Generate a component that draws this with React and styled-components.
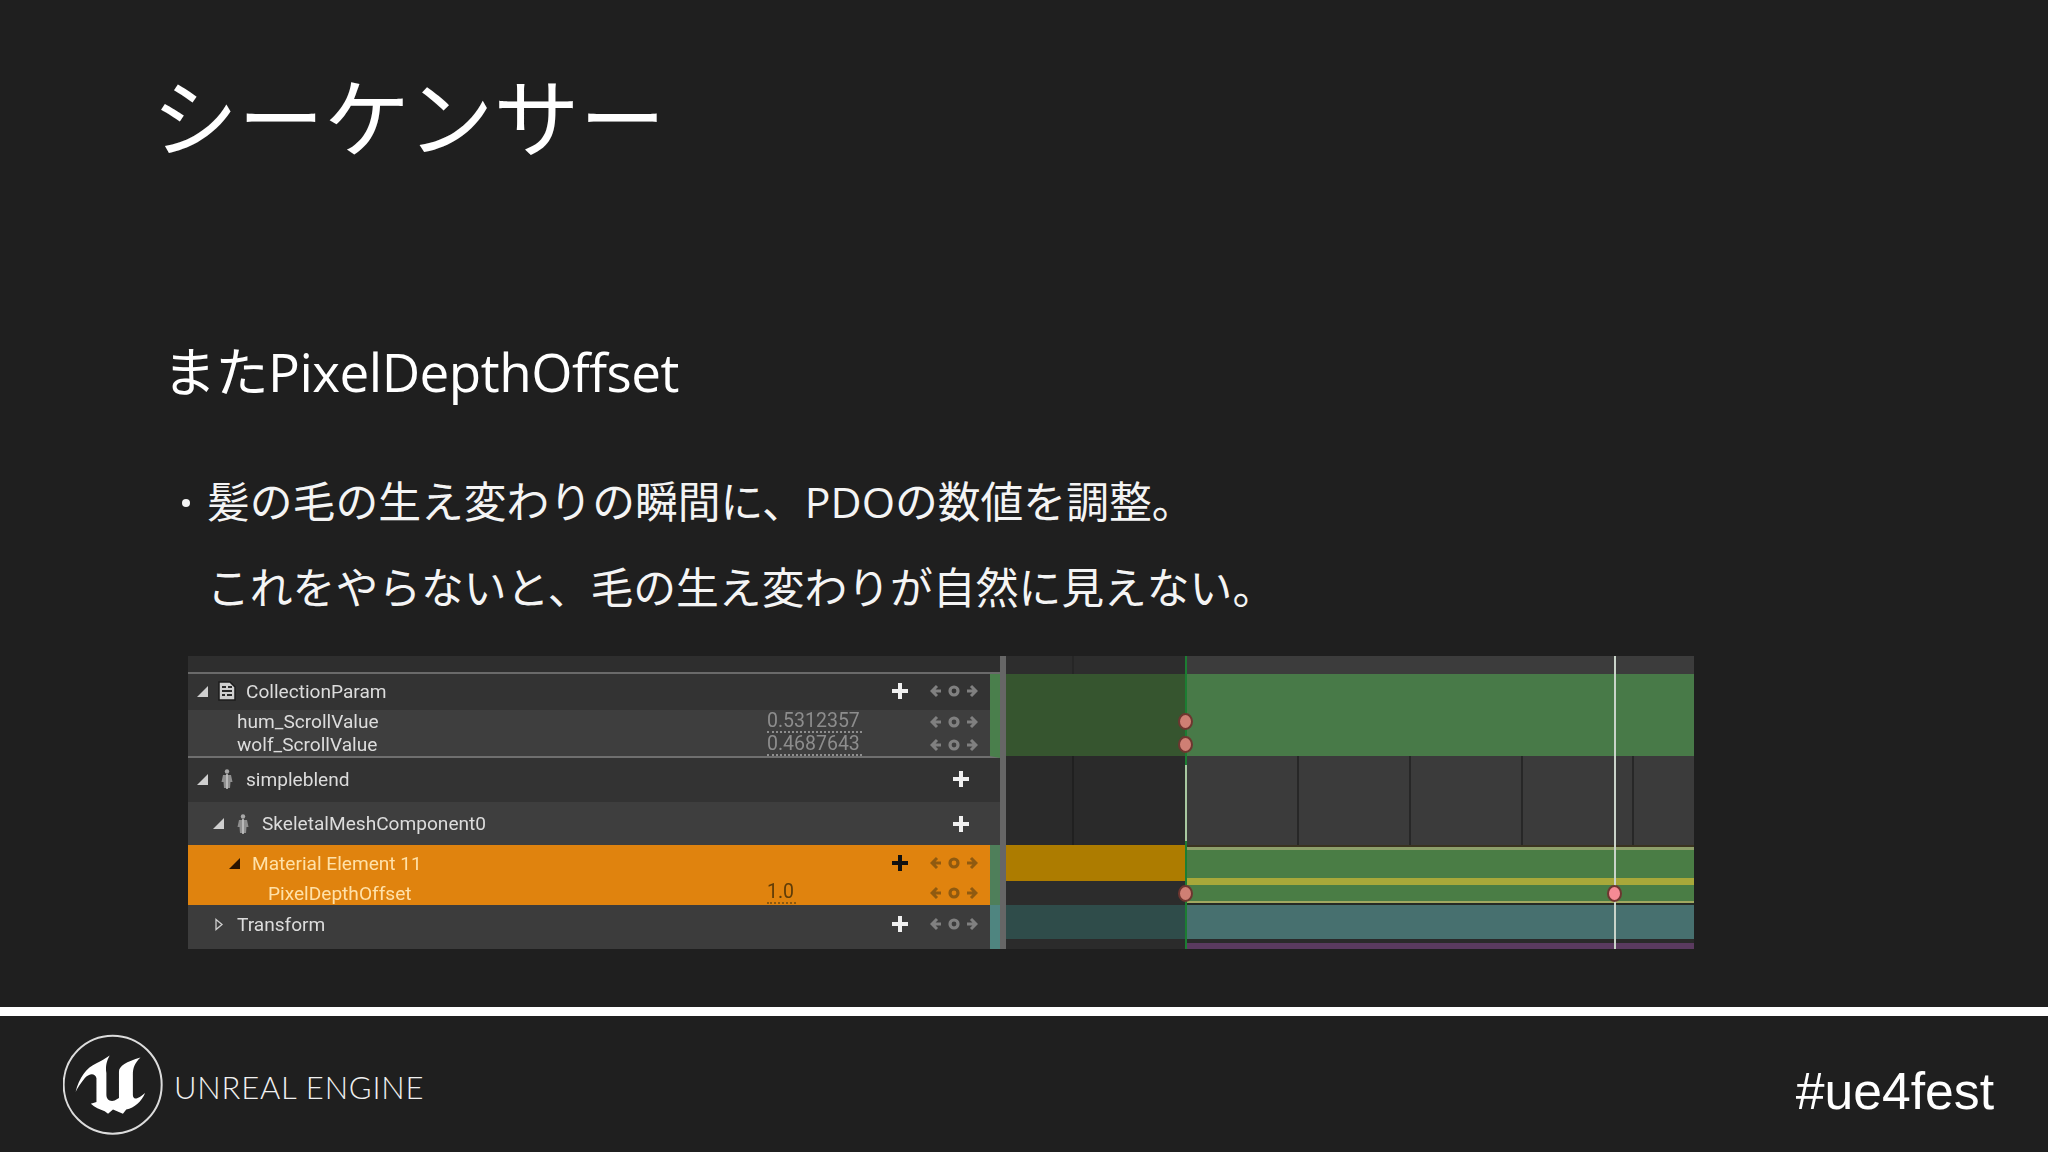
import React from 'react';
import styled, { createGlobalStyle } from 'styled-components';

const GlobalStyle = createGlobalStyle`
  html, body {
    margin: 0;
    background: #1f1f1f;
  }
`;

const JP = `"Open Sans", "Noto Sans CJK JP", sans-serif`;

const Slide = styled.div`
  width: 2048px;
  height: 1152px;
  display: flex;
  flex-direction: column;
  overflow: hidden;
  background: #1f1f1f;
  color: #fff;
  font-family: ${JP};
`;

const Main = styled.main`
  height: 1007px;
  padding: 68px 0 0 155px;
  box-sizing: border-box;
  display: flex;
  flex-direction: column;
`;

const Title = styled.h1`
  margin: 0 0 0 -3px;
  font-size: 86px;
  line-height: 100px;
  font-weight: 400;
`;

const Subtitle = styled.h2`
  margin: 169px 0 0 8px;
  font-size: 53px;
  line-height: 70px;
  font-weight: 400;
  letter-spacing: -0.5px;
`;

const BulletList = styled.div`
  margin: 74px 0 0 23px;
  display: flex;
  flex-direction: column;
  gap: 44px;
  font-size: 42.8px;
  line-height: 42px;
  font-weight: 400;
  color: #f4f4f4;
`;

const BulletLine = styled.div`
  padding-left: 30px;
  margin-left: -1px;
  white-space: nowrap;
  position: relative;
`;

const BulletDot = styled.span`
  position: absolute;
  left: 5px;
  top: 18px;
  width: 8px;
  height: 8px;
  border-radius: 50%;
  background: #f4f4f4;
`;

/* sequencer capture, the source picture is soft so the whole block gets a slight blur */
const Sequencer = styled.section`
  margin: 47px 0 0 33px;
  width: 1506px;
  height: 293px;
  display: flex;
  font-family: Roboto, sans-serif;
  filter: blur(0.5px);
`;

const Outliner = styled.div`
  width: 812px;
  display: flex;
  flex-direction: column;
  background: #333;
`;

const Splitter = styled.div`
  width: 6px;
  background: #666;
`;

const HeaderBand = styled.div`
  height: 16px;
  background: #2e2e2e;
  border-bottom: 2px solid #6a6a6a;
`;

const Row = styled.div`
  height: ${({ $h }) => $h}px;
  display: grid;
  grid-template-columns: 579px 118px 30px 15px 48px 12px;
  align-items: center;
  box-sizing: border-box;
  background: ${({ $bg }) => $bg};
  border-bottom: ${({ $line }) => ($line ? '2px solid #6f6f6f' : '0')};
  border-right: 10px solid ${({ $strip, $bg }) => $strip || $bg};
  padding-bottom: ${({ $lift }) => $lift || 0}px;
  color: ${({ $accent }) => ($accent ? '#ffe1a8' : '#dcdcdc')};
  font-size: 19.1px;
`;

const LabelCell = styled.div`
  display: flex;
  align-items: center;
  padding-left: ${({ $indent }) => $indent}px;
  white-space: nowrap;
`;

const ToggleIcon = styled.svg`
  width: 13px;
  height: 13px;
  margin-right: ${({ $gap }) => $gap}px;
  flex: none;
`;

const RowIcon = styled.svg`
  width: 20px;
  height: 22px;
  margin-right: 9px;
  flex: none;
`;

const Value = styled.span`
  justify-self: start;
  color: ${({ $accent }) => ($accent ? '#5e3c08' : '#8d8d8d')};
  border-bottom: 2px dotted ${({ $accent }) => ($accent ? '#8c5a10' : '#8d8d8d')};
  font-size: 19.5px;
  line-height: 20px;
  padding-right: 2px;
  grid-column: 2;
`;

const PlusIcon = styled.svg`
  width: 18px;
  height: 18px;
  justify-self: center;
  grid-column: ${({ $far }) => ($far ? 5 : 3)};
  ${({ $far }) => ($far ? 'margin-left: 13px;' : '')}
`;

const KeyControls = styled.svg`
  width: 48px;
  height: 14px;
  grid-column: 5;
`;

const Timeline = styled.div`
  position: relative;
  width: 688px;
  display: grid;
  grid-template-columns: 180px 508px;
  grid-template-rows: 18px 82px 89px 60px 34px 10px;
`;

const Track = styled.div`
  background: ${({ $bg }) => $bg};
`;

const GridTrack = styled.div`
  background: ${({ $stops, $line, $bg }) =>
    `${$stops
      .map((x) => `linear-gradient(${$line}, ${$line}) ${x}px 0 / 2px 100% no-repeat`)
      .join(', ')}, ${$bg}`};
`;

const Stack = styled.div`
  display: flex;
  flex-direction: column;
`;

const Slice = styled.div`
  height: ${({ $h }) => $h}px;
  background: ${({ $bg }) => $bg};
  flex: none;
`;

const Playhead = styled.div`
  position: absolute;
  top: 0;
  bottom: 0;
  left: ${({ $x }) => $x}px;
  width: 2px;
  background: ${({ $color }) => $color};
`;

const Segment = styled.div`
  position: absolute;
  top: 109px;
  height: 76px;
  left: 179px;
  width: 2px;
  background: #a8c8a0;
`;

const Keyframe = styled.div`
  position: absolute;
  left: ${({ $x }) => $x - 8}px;
  top: ${({ $y }) => $y - 9}px;
  width: 11px;
  height: 13px;
  border: 2.5px solid #6e3630;
  border-radius: 50%;
  background: ${({ $bright }) => ($bright ? '#f58a94' : '#cf7f74')};
`;

const Rule = styled.div`
  height: 9px;
  background: #fff;
  flex: none;
`;

const Footer = styled.footer`
  flex: 1;
  display: flex;
  align-items: flex-start;
  justify-content: space-between;
  padding: 18px 54px 0 63px;
`;

const Brand = styled.div`
  display: flex;
  align-items: center;
  gap: 11px;
`;

const BrandName = styled.span`
  font-family: Lato, sans-serif;
  font-weight: 300;
  font-size: 31px;
  letter-spacing: 0.8px;
  color: #f0f0f0;
  margin-top: 4px;
`;

const Hashtag = styled.span`
  font-family: "Liberation Sans", Arial, sans-serif;
  font-size: 51.7px;
  line-height: 56px;
  margin-top: 29px;
  color: #fff;
`;

const Toggle = ({ open, color = '#cfcfcf', gap = 8 }) => (
  <ToggleIcon $gap={gap} viewBox="0 0 13 13">
    {open ? (
      <path d="M12 1 L12 12 L1 12 Z" fill={color} />
    ) : (
      <path d="M4 1.5 L10 6.5 L4 11.5 Z" fill="none" stroke={color} strokeWidth="1.3" />
    )}
  </ToggleIcon>
);

const ParamIcon = () => (
  <RowIcon viewBox="0 0 20 22">
    <path d="M2 2 H13 L18 7 V20 H2 Z" fill="#cfcfcf" stroke="#1c1c1c" strokeWidth="1.5" />
    <path d="M5 7 H9 M11 7 H15 M5 11 H15 M5 15 H8 M10 15 H15" stroke="#2a2a2a" strokeWidth="2" />
  </RowIcon>
);

const PersonIcon = () => (
  <RowIcon viewBox="0 0 20 22">
    <circle cx="10" cy="3.5" r="2.2" fill="#a8a8a8" />
    <path d="M6 7 H14 L15.5 14 H13.5 L13 20 H7 L6.5 14 H4.5 Z" fill="#8f8f8f" />
    <path d="M10 6 V21" stroke="#c4c4c4" strokeWidth="1.6" />
  </RowIcon>
);

const Plus = ({ far, color = '#f0f0f0' }) => (
  <PlusIcon $far={far} viewBox="0 0 18 18">
    <path d="M7 1 H11 V7 H17 V11 H11 V17 H7 V11 H1 V7 H7 Z" fill={color} />
  </PlusIcon>
);

const Keys = ({ color = '#808080' }) => (
  <KeyControls viewBox="0 0 48 14">
    <path d="M11 7 H3 M7 2 L2 7 L7 12" fill="none" stroke={color} strokeWidth="3" />
    <circle cx="24" cy="7" r="4" fill="none" stroke={color} strokeWidth="3.2" />
    <path d="M37 7 H45 M41 2 L46 7 L41 12" fill="none" stroke={color} strokeWidth="3" />
  </KeyControls>
);

const UnrealLogo = () => (
  <svg width="100" height="102" viewBox="24 18 302 306" aria-hidden="true">
    <circle cx="174" cy="170" r="148" fill="none" stroke="#dcdcdc" strokeWidth="6" />
    <path
      d="M62 192 C72 150 95 118 125 105 C140 98 150 92 165 82 C155 100 152 115 155 135 L155 200 C155 215 165 222 180 218 L193 210 L193 130 C193 115 215 100 258 88 C240 105 235 120 235 140 L235 200 C235 215 245 218 272 195 C262 220 240 240 215 245 L205 258 L175 245 L160 258 L150 250 C135 245 120 240 108 228 L125 222 L125 150 C120 135 105 135 90 150 C78 165 68 180 62 192 Z"
      fill="#fff"
    />
  </svg>
);

const App = () => (
  <Slide>
    <GlobalStyle />
    <Main>
      <Title>シーケンサー</Title>
      <Subtitle>またPixelDepthOffset</Subtitle>
      <BulletList>
        <BulletLine>
          <BulletDot />
          髪の毛の生え変わりの瞬間に、PDOの数値を調整。
        </BulletLine>
        <BulletLine>これをやらないと、毛の生え変わりが自然に見えない。</BulletLine>
      </BulletList>
      <Sequencer>
        <Outliner>
          <HeaderBand />
          <Row $h={36} $bg="#333" $strip="#4a7f4c" $lift={2}>
            <LabelCell $indent={8}>
              <Toggle open />
              <ParamIcon />
              CollectionParam
            </LabelCell>
            <Plus />
            <Keys />
          </Row>
          <Row $h={23} $bg="#3e3e3e" $strip="#4a7f4c">
            <LabelCell $indent={49}>hum_ScrollValue</LabelCell>
            <Value>0.5312357</Value>
            <Keys />
          </Row>
          <Row $h={25} $bg="#3e3e3e" $strip="#4a7f4c" $line>
            <LabelCell $indent={49}>wolf_ScrollValue</LabelCell>
            <Value>0.4687643</Value>
            <Keys />
          </Row>
          <Row $h={44} $bg="#333" $lift={2}>
            <LabelCell $indent={8}>
              <Toggle open />
              <PersonIcon />
              simpleblend
            </LabelCell>
            <Plus far />
          </Row>
          <Row $h={43} $bg="#3e3e3e">
            <LabelCell $indent={24}>
              <Toggle open />
              <PersonIcon />
              SkeletalMeshComponent0
            </LabelCell>
            <Plus far />
          </Row>
          <Row $h={36} $bg="#e0830e" $strip="#4f7f5a" $accent>
            <LabelCell $indent={40}>
              <Toggle open color="#2a1400" gap={11} />
              Material Element 11
            </LabelCell>
            <Plus color="#111" />
            <Keys color="#8f5a10" />
          </Row>
          <Row $h={24} $bg="#e0830e" $strip="#4f7f5a" $accent>
            <LabelCell $indent={80}>PixelDepthOffset</LabelCell>
            <Value $accent>1.0</Value>
            <Keys color="#8f5a10" />
          </Row>
          <Row $h={44} $bg="#3c3c3c" $strip="#4f8580" $lift={6}>
            <LabelCell $indent={24}>
              <Toggle gap={12} />
              Transform
            </LabelCell>
            <Plus />
            <Keys />
          </Row>
        </Outliner>
        <Splitter />
        <Timeline>
          <GridTrack $bg="#2d2d2d" $line="#262626" $stops={[66]} />
          <Track $bg="#3c3c3c" />
          <Track $bg="#36552f" />
          <Track $bg="#487a48" />
          <GridTrack $bg="#2a2a2a" $line="#202020" $stops={[66]} />
          <GridTrack $bg="#3b3b3b" $line="#272727" $stops={[111, 223, 335, 446]} />
          <Stack>
            <Slice $h={36} $bg="#ad7c00" />
            <Slice $h={24} $bg="#2c2c2c" />
          </Stack>
          <Stack>
            <Slice $h={2} $bg="#3a3320" />
            <Slice $h={3} $bg="#8d9f6a" />
            <Slice $h={28} $bg="#4a7d45" />
            <Slice $h={7} $bg="#a8a83a" />
            <Slice $h={16} $bg="#4a7d45" />
            <Slice $h={2} $bg="#a0a860" />
            <Slice $h={2} $bg="#252a25" />
          </Stack>
          <Track $bg="#2f4c4a" />
          <Track $bg="#47706f" />
          <Track $bg="#2b2b2b" />
          <Stack>
            <Slice $h={4} $bg="#2a2a2a" />
            <Slice $h={6} $bg="#5a3a5f" />
          </Stack>
          <Playhead $x={179} $color="#1c7d32" />
          <Segment />
          <Playhead $x={608} $color="#c9d3c9" />
          <Keyframe $x={180} $y={66} />
          <Keyframe $x={180} $y={89} />
          <Keyframe $x={180} $y={238} />
          <Keyframe $x={609} $y={238} $bright />
        </Timeline>
      </Sequencer>
    </Main>
    <Rule />
    <Footer>
      <Brand>
        <UnrealLogo />
        <BrandName>UNREAL ENGINE</BrandName>
      </Brand>
      <Hashtag>#ue4fest</Hashtag>
    </Footer>
  </Slide>
);

export default App;
